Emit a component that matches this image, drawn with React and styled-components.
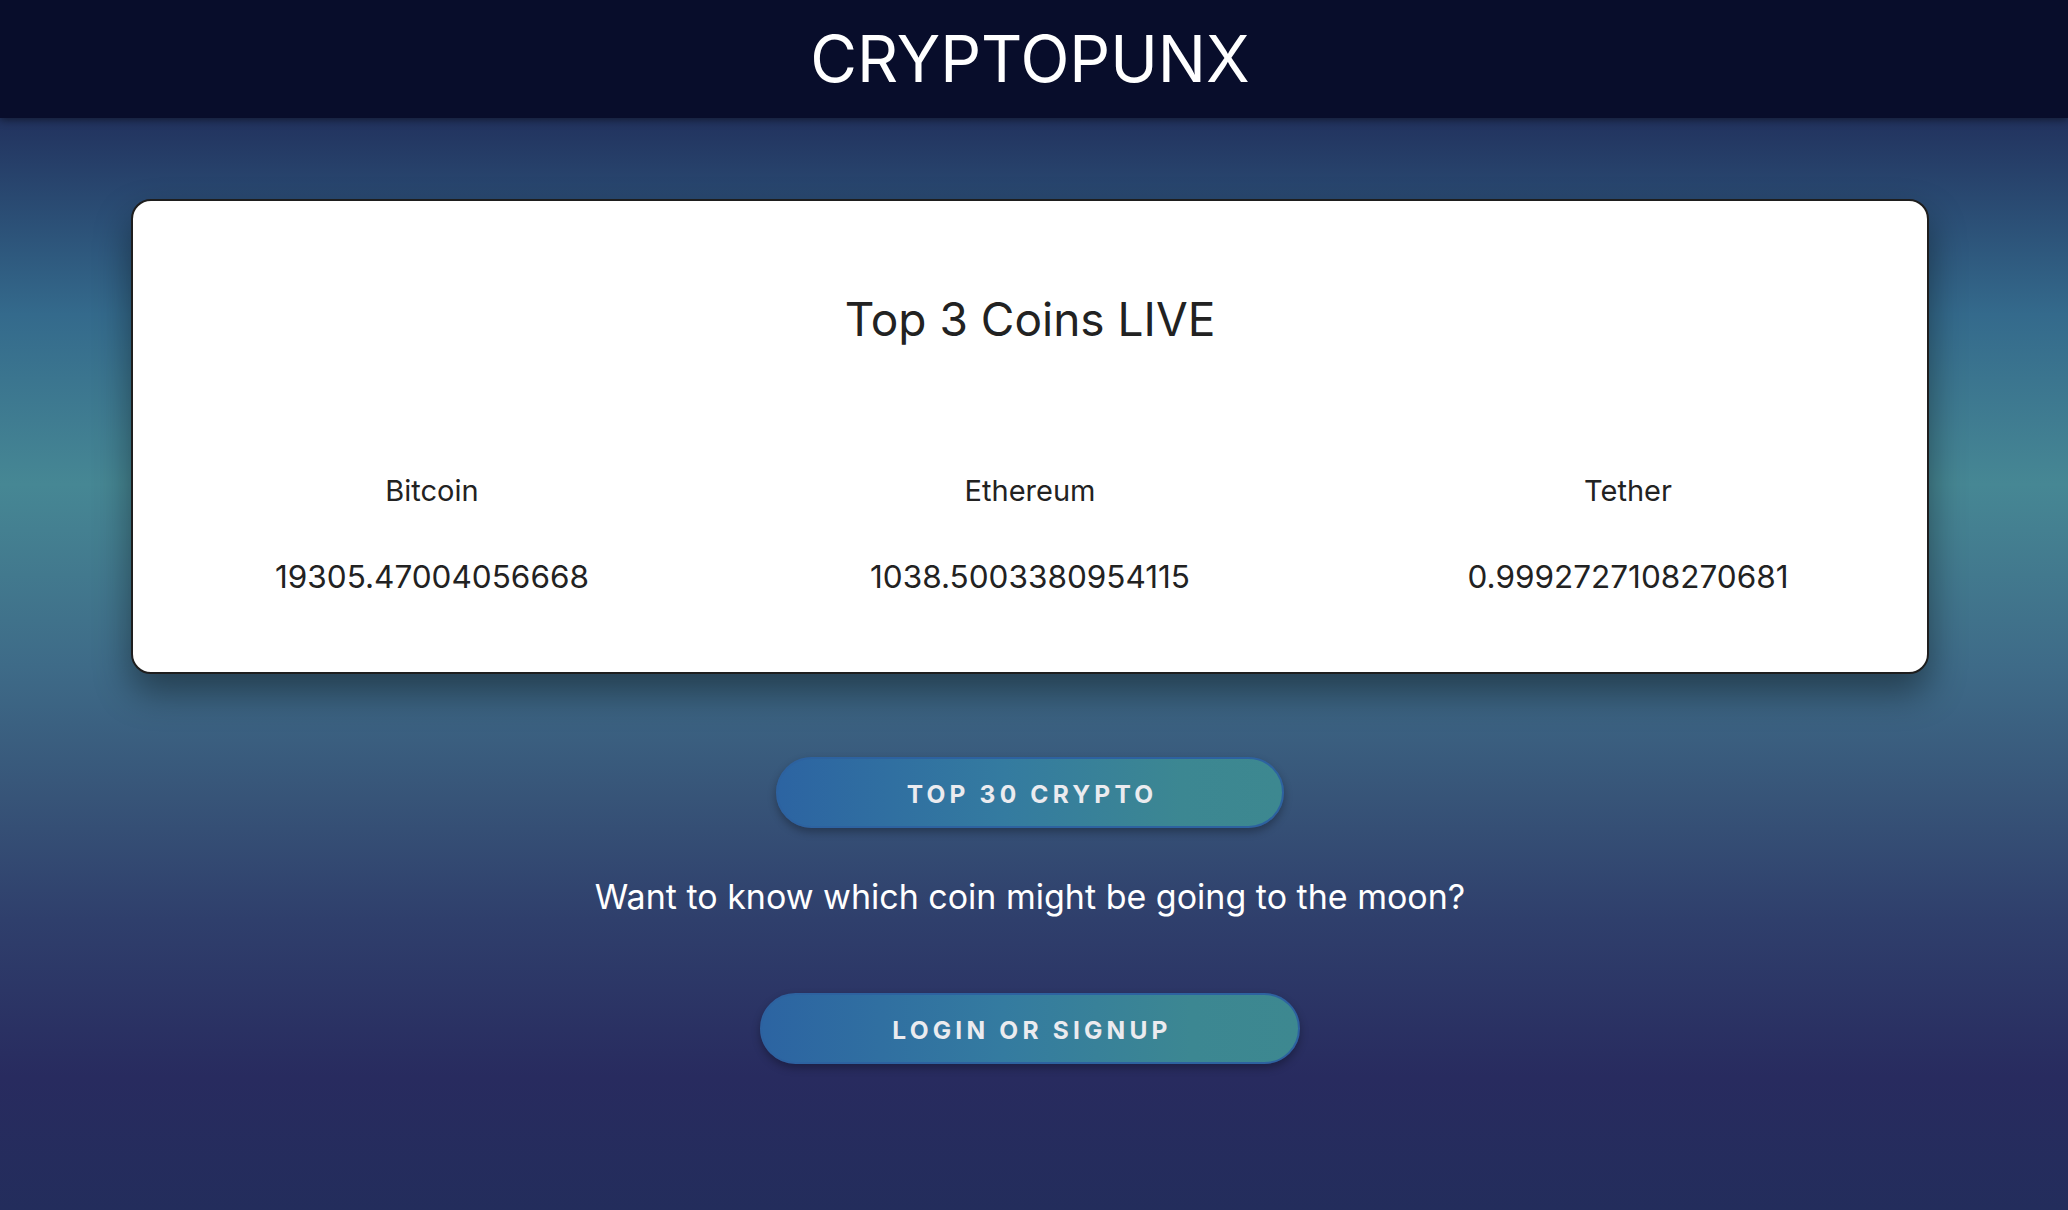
import React from 'react';
import styled, {createGlobalStyle} from 'styled-components';

const GlobalStyle = createGlobalStyle`
  html, body {
    margin: 0;
    padding: 0;
  }
  body {
    font-family: Inter, "Noto Sans", sans-serif;
    background: #232d5c;
  }
`;

const Page = styled.div`
  min-height: 100vh;
  background: linear-gradient(
    180deg,
    #1f2a58 0%,
    #22335f 10%,
    #346a8c 26%,
    #468794 40%,
    #3e6b88 55%,
    #375478 66%,
    #2f3f6c 76%,
    #282b5f 89%,
    #232d5c 100%
  );
`;

/* top bar with the site name */
const Header = styled.header`
  height: 118px;
  background: #080d2b;
  display: flex;
  align-items: center;
  justify-content: center;
  padding-right: 8px;
  box-shadow: 0 2px 8px rgba(0, 0, 0, 0.45);
  position: relative;
`;

const Logo = styled.h1`
  margin: 0;
  color: #fff;
  font-size: 64px;
  font-weight: 400;
  line-height: 76px;
`;

const Main = styled.main`
  display: flex;
  flex-direction: column;
  align-items: center;
  padding: 81px 139px 60px 131px;
`;

const Card = styled.section`
  box-sizing: border-box;
  width: 100%;
  background: #fff;
  border: 2px solid #1e1e1e;
  border-radius: 20px;
  padding: 88px 0 75px;
  box-shadow: 0 18px 36px rgba(0, 0, 0, 0.42);
  color: #222;
  text-align: center;
`;

const Title = styled.h2`
  margin: 0 0 122px;
  font-size: 46px;
  font-weight: 400;
  line-height: 60px;
`;

const CoinGrid = styled.div`
  display: grid;
  grid-template-columns: repeat(3, 1fr);
`;

const Coin = styled.div`
  display: flex;
  flex-direction: column;
  align-items: center;
  gap: 46px;
`;

const CoinText = styled.div`
  font-size: ${props => props.big ? '31.5px' : '29px'};
  line-height: 40px;
`;

const PillButton = styled.button`
  box-sizing: border-box;
  height: 71px;
  padding: 3px ${props => props.pad}px 0 ${props => props.pad + 4}px;
  margin-top: ${props => props.top}px;
  border-radius: 36px;
  border: 2px solid #2d62a0;
  background: linear-gradient(90deg, #2c64a2 0%, #347ba0 45%, #3c8792 80%, #3d8890 100%);
  color: #ebebef;
  font-family: Inter, "Noto Sans", sans-serif;
  font-size: 24.5px;
  font-weight: 700;
  letter-spacing: 4.2px;
  box-shadow: 0 4px 8px rgba(0, 0, 0, 0.3);
  cursor: pointer;
`;

const Teaser = styled.p`
  margin: 47px 0 0;
  color: #fff;
  font-size: 34px;
  line-height: 44px;
`;

const coins = [
  {id: 'btc', name: 'Bitcoin', price: '19305.47004056668'},
  {id: 'eth', name: 'Ethereum', price: '1038.5003380954115'},
  {id: 'usdt', name: 'Tether', price: '0.9992727108270681'},
];

export default function App() {
  return (
    <Page>
      <GlobalStyle />
      <Header>
        <Logo>CRYPTOPUNX</Logo>
      </Header>
      <Main>
        <Card>
          <Title>Top 3 Coins LIVE</Title>
          <CoinGrid>
            {coins.map(c => (
              <Coin key={c.id}>
                <CoinText>{c.name}</CoinText>
                <CoinText big>{c.price}</CoinText>
              </Coin>
            ))}
          </CoinGrid>
        </Card>
        <PillButton top={83} pad={125}>TOP 30 CRYPTO</PillButton>
        <Teaser>Want to know which coin might be going to the moon?</Teaser>
        <PillButton top={74} pad={126}>LOGIN OR SIGNUP</PillButton>
      </Main>
    </Page>
  );
}
